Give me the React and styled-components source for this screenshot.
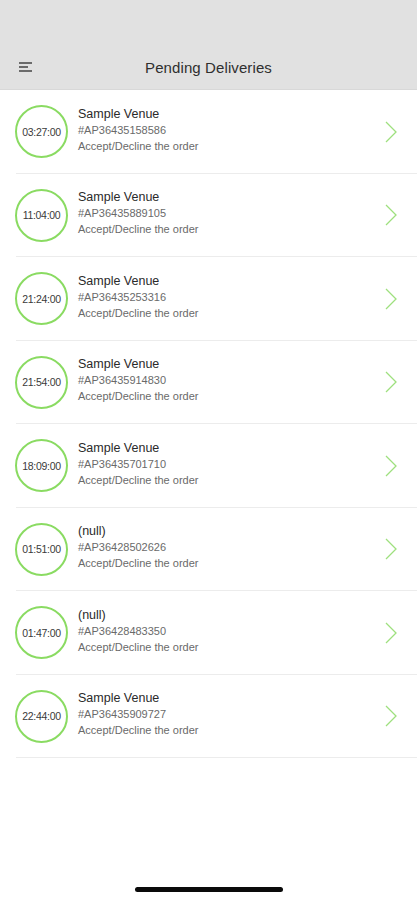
import React from "react";
import styled, { createGlobalStyle } from "styled-components";

const GlobalStyle = createGlobalStyle`
  html, body {
    margin: 0;
    padding: 0;
    background: #ffffff;
    font-family: "Liberation Sans", Arial, sans-serif;
  }
`;

const Screen = styled.div`
  width: 417px;
  height: 900px;
  display: flex;
  flex-direction: column;
  background: #ffffff;
  overflow: hidden;
`;

const Header = styled.header`
  height: 90px;
  background: #e1e1e1;
  display: flex;
  align-items: flex-end;
  flex-shrink: 0;
  border-bottom: 1px solid #d8d8d8;
  box-sizing: border-box;
`;

const HeaderBar = styled.div`
  flex: 1;
  height: 44px;
  display: grid;
  grid-template-columns: 60px 1fr 60px;
  align-items: center;
`;

const MenuButton = styled.div`
  padding-left: 19px;
  display: flex;
  align-items: center;
`;

const Title = styled.h1`
  margin: 0;
  text-align: center;
  font-size: 15px;
  font-weight: 400;
  color: #2f2f2f;
  letter-spacing: 0.1px;
`;

const List = styled.ul`
  list-style: none;
  margin: 0;
  padding: 0;
`;

const Row = styled.li`
  height: 83.5px;
  display: flex;
  align-items: center;
  padding-left: 15px;
  padding-right: 19px;
  position: relative;

  :after {
    content: "";
    position: absolute;
    left: 16px;
    right: 0;
    bottom: 0;
    height: 1px;
    background: #ececec;
  }
`;

const Timer = styled.div`
  width: 49px;
  height: 49px;
  border: 2px solid #8adb62;
  border-radius: 50%;
  display: flex;
  align-items: center;
  justify-content: center;
  font-size: 10.5px;
  color: #3a3a3a;
  flex-shrink: 0;
  letter-spacing: -0.3px;
`;

const Info = styled.div`
  flex: 1;
  margin-left: 10px;
  display: flex;
  flex-direction: column;
  gap: 1px;
  margin-top: -3px;
`;

const Venue = styled.div`
  font-size: 12.5px;
  color: #2a2a2a;
  line-height: 15px;
`;

const Meta = styled.div`
  font-size: 11px;
  color: #6a6a6a;
  line-height: 15px;
`;

const Chevron = styled.div`
  width: 14px;
  display: flex;
  align-items: center;
`;

const HomeIndicator = styled.div`
  margin-top: auto;
  margin-bottom: 8px;
  align-self: center;
  width: 148px;
  height: 5px;
  border-radius: 3px;
  background: #0a0a0a;
`;

const orders = [
  { time: "03:27:00", venue: "Sample Venue", id: "#AP36435158586" },
  { time: "11:04:00", venue: "Sample Venue", id: "#AP36435889105" },
  { time: "21:24:00", venue: "Sample Venue", id: "#AP36435253316" },
  { time: "21:54:00", venue: "Sample Venue", id: "#AP36435914830" },
  { time: "18:09:00", venue: "Sample Venue", id: "#AP36435701710" },
  { time: "01:51:00", venue: "(null)", id: "#AP36428502626" },
  { time: "01:47:00", venue: "(null)", id: "#AP36428483350" },
  { time: "22:44:00", venue: "Sample Venue", id: "#AP36435909727" }
];

const MenuIcon = () => (
  <svg width="14" height="10" viewBox="0 0 14 10">
    <rect x="0" y="0" width="13" height="2" fill="#6b6b6b" />
    <rect x="0" y="4" width="9" height="2" fill="#6b6b6b" />
    <rect x="0" y="8" width="13" height="2" fill="#6b6b6b" />
  </svg>
);

const ChevronIcon = () => (
  <svg width="14" height="24" viewBox="0 0 14 24">
    <path d="M2 2 L12 12 L2 22" fill="none" stroke="#9ee07e" strokeWidth="1.3" />
  </svg>
);

export default function App() {
  return (
    <Screen>
      <GlobalStyle />
      <Header>
        <HeaderBar>
          <MenuButton>
            <MenuIcon />
          </MenuButton>
          <Title>Pending Deliveries</Title>
          <div />
        </HeaderBar>
      </Header>
      <List>
        {orders.map((o) => (
          <Row key={o.id}>
            <Timer>{o.time}</Timer>
            <Info>
              <Venue>{o.venue}</Venue>
              <Meta>{o.id}</Meta>
              <Meta>Accept/Decline the order</Meta>
            </Info>
            <Chevron>
              <ChevronIcon />
            </Chevron>
          </Row>
        ))}
      </List>
      <HomeIndicator />
    </Screen>
  );
}
